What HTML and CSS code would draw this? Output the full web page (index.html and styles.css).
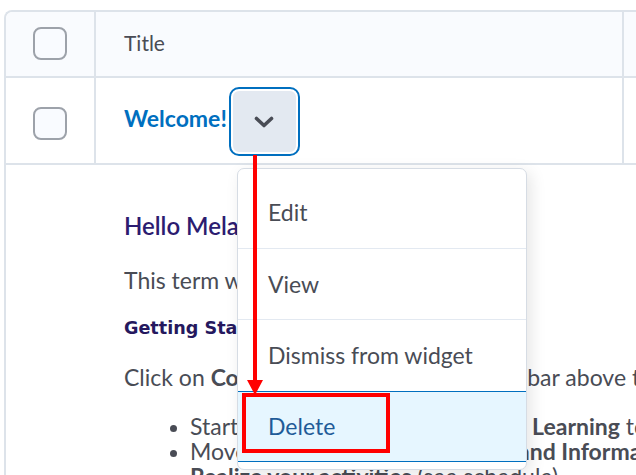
FILE: index.html
```html
<!DOCTYPE html>
<html>
<head>
<meta charset="utf-8">
<link rel="stylesheet" href="styles.css">
</head>
<body>
<div class="page">
  <div class="table">
    <div class="row head">
      <div class="cell sel"><span class="cb"></span></div>
      <div class="cell title">Title</div>
      <div class="cell rest"></div>
    </div>
    <div class="row item">
      <div class="cell sel"><span class="cb"></span></div>
      <div class="cell title">
        <a class="link">Welcome!</a>
        <button class="chev" aria-label="Actions">
          <svg width="22" height="13" viewBox="0 0 22 13"><path d="M3.5 2.5 L11 9.5 L18.5 2.5" fill="none" stroke="#494c55" stroke-width="3.6" stroke-linecap="round" stroke-linejoin="round"/></svg>
        </button>
      </div>
      <div class="cell rest"></div>
    </div>
    <div class="detail">
      <h3 class="hello">Hello Melanie,</h3>
      <p class="txt">This term we will work together.</p>
      <p class="gs">Getting Started</p>
      <p class="txt">Click on <b>Content</b> in the class navigation bar above to begin.</p>
      <ul class="list">
        <li>Start by browsing <b>Introduction to Learning</b> to get started</li>
        <li>Move over to <b>Course Resources and Information</b></li>
        <li><b>Realize your activities</b> (see schedule)</li>
      </ul>
    </div>
  </div>

  <div class="menu">
    <div class="mi">Edit</div>
    <div class="mi">View</div>
    <div class="mi">Dismiss from widget</div>
    <div class="mi active">Delete</div>
  </div>

  <div class="hl-box"></div>
  <svg class="arrow" width="30" height="250" viewBox="0 0 30 250">
    <rect x="13" y="0" width="4" height="228" fill="#ff0000"/>
    <polygon points="7,225 23,225 15,240" fill="#ff0000"/>
  </svg>
</div>
</body>
</html>
```

FILE: styles.css
```css
html, body {
  margin: 0;
  padding: 0;
  overflow: hidden;
  background: #ffffff;
}
body {
  font-family: Lato, "Open Sans", sans-serif;
  color: #494c55;
  width: 636px;
  height: 475px;
}
.page {
  position: relative;
  width: 636px;
  height: 475px;
  overflow: hidden;
}
.table {
  margin: 10px 0 0 4px;
  width: 800px;
  border-top: 2px solid #dde3ea;
  border-left: 2px solid #dde3ea;
  border-top-left-radius: 8px;
}
.row {
  display: flex;
  border-bottom: 2px solid #dde3ea;
}
.head {
  height: 64px;
  background: #f9fbfe;
  border-top-left-radius: 7px;
}
.item {
  height: 85px;
}
.cell {
  display: flex;
  align-items: center;
}
.sel {
  width: 88px;
  justify-content: center;
  border-right: 2px solid #dde3ea;
}
.title {
  width: 498px;
  padding-left: 28px;
  border-right: 2px solid #dde3ea;
  font-size: 21px;
  color: #494c55;
}
.head .title {
  padding-bottom: 4px;
  box-sizing: content-box;
  height: 60px;
}
.rest {
  flex: 1;
}
.cb {
  display: block;
  width: 30px;
  height: 29px;
  border: 2px solid #9da2aa;
  border-radius: 8px;
  background: #f9fbff;
  margin-top: -1px;
}
.item .cb {
  margin-top: 6px;
}
.link {
  color: #006fbf;
  font-weight: 700;
  font-size: 23px;
  margin-top: -5px;
}
.chev {
  margin-left: 2px;
  width: 71px;
  height: 69px;
  border: 2px solid #006fbf;
  border-radius: 10px;
  background: #e3e9f1;
  box-shadow: inset 0 0 0 2px #ffffff;
  display: flex;
  align-items: center;
  justify-content: center;
  padding: 0;
  margin-top: 1px;
}
.chev svg {
  display: block;
  margin-top: 2px;
}
.detail {
  padding: 0 0 0 118px;
  height: 320px;
}
.hello {
  margin: 46px 0 0 0;
  font-size: 24px;
  line-height: 30px;
  font-weight: 600;
  color: #2c1c70;
  font-family: Lato, sans-serif;
  white-space: nowrap;
}
.txt {
  margin: 0;
  font-size: 23px;
  line-height: 30px;
  color: #494c55;
  white-space: nowrap;
}
.hello + .txt {
  margin-top: 24px;
}
.gs {
  margin: 18px 0 19px 0;
  font-family: "DejaVu Sans", Verdana, sans-serif;
  font-size: 17.6px;
  line-height: 30px;
  font-weight: 700;
  color: #25185e;
  white-space: nowrap;
}
.list {
  margin: 22px 0 0 0;
  padding-left: 66px;
  font-size: 23px;
  line-height: 25px;
  white-space: nowrap;
}
.list li::marker {
  font-size: 20px;
}
.menu {
  position: absolute;
  left: 237px;
  top: 168px;
  width: 290px;
  padding: 7px 0;
  box-sizing: border-box;
  height: 302px;
  background: #ffffff;
  border: 1px solid #d6dce4;
  border-radius: 7px;
  box-shadow: 4px 4px 16px rgba(0, 0, 0, 0.10);
  display: flex;
  flex-direction: column;
}
.mi {
  height: 72px;
  box-sizing: border-box;
  padding-left: 30px;
  display: flex;
  align-items: center;
  font-size: 23px;
  color: #494c55;
  border-top: 1px solid #e3e9f1;
}
.mi:first-child {
  border-top: none;
}
.mi.active {
  background: #e6f6ff;
  color: #1f5b98;
  border-top: 1px solid #006fbf;
  border-bottom: 1px solid #006fbf;
}
.hl-box {
  position: absolute;
  left: 242px;
  top: 393px;
  width: 148px;
  height: 60px;
  box-sizing: border-box;
  border: 4px solid #ff0000;
}
.arrow {
  position: absolute;
  left: 240px;
  top: 155px;
}
```
